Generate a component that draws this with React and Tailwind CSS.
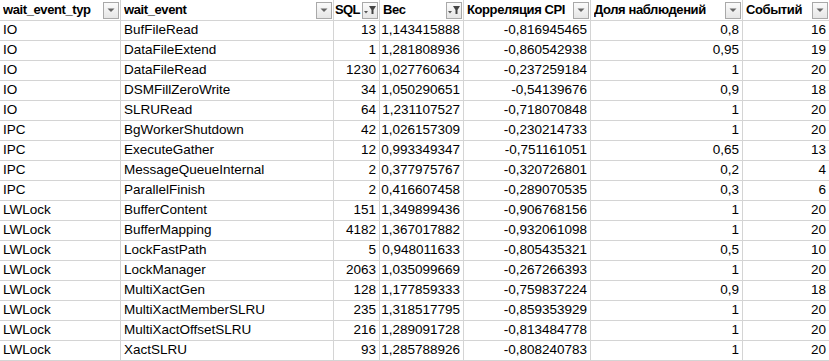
const cols = ["w-[121px]", "w-[213px]", "w-[46px]", "w-[84px]", "w-[127px]", "w-[152px]", "w-[87px]"];

const headers = [
  { title: "wait_event_typ", filter: false, pad: "pl-[3px]" },
  { title: "wait_event", filter: false, pad: "pl-[3px]" },
  { title: "SQL", filter: true, pad: "pl-[1px] tracking-[-0.6px]" },
  { title: "Вес", filter: true, pad: "pl-[3px]" },
  { title: "Корреляция CPI", filter: false, pad: "pl-[3px]" },
  { title: "Доля наблюдений", filter: false, pad: "pl-[3px]" },
  { title: "Событий", filter: false, pad: "pl-[3px]" },
];

const rows = [
  ["IO", "BufFileRead", "13", "1,143415888", "-0,816945465", "0,8", "16"],
  ["IO", "DataFileExtend", "1", "1,281808936", "-0,860542938", "0,95", "19"],
  ["IO", "DataFileRead", "1230", "1,027760634", "-0,237259184", "1", "20"],
  ["IO", "DSMFillZeroWrite", "34", "1,050290651", "-0,54139676", "0,9", "18"],
  ["IO", "SLRURead", "64", "1,231107527", "-0,718070848", "1", "20"],
  ["IPC", "BgWorkerShutdown", "42", "1,026157309", "-0,230214733", "1", "20"],
  ["IPC", "ExecuteGather", "12", "0,993349347", "-0,751161051", "0,65", "13"],
  ["IPC", "MessageQueueInternal", "2", "0,377975767", "-0,320726801", "0,2", "4"],
  ["IPC", "ParallelFinish", "2", "0,416607458", "-0,289070535", "0,3", "6"],
  ["LWLock", "BufferContent", "151", "1,349899436", "-0,906768156", "1", "20"],
  ["LWLock", "BufferMapping", "4182", "1,367017882", "-0,932061098", "1", "20"],
  ["LWLock", "LockFastPath", "5", "0,948011633", "-0,805435321", "0,5", "10"],
  ["LWLock", "LockManager", "2063", "1,035099669", "-0,267266393", "1", "20"],
  ["LWLock", "MultiXactGen", "128", "1,177859333", "-0,759837224", "0,9", "18"],
  ["LWLock", "MultiXactMemberSLRU", "235", "1,318517795", "-0,859353929", "1", "20"],
  ["LWLock", "MultiXactOffsetSLRU", "216", "1,289091728", "-0,813484778", "1", "20"],
  ["LWLock", "XactSLRU", "93", "1,285788926", "-0,808240783", "1", "20"],
];

const FilterButton = ({ filter }) => (
  <div className="shrink-0 w-[16px] h-[17px] border border-[#a9a9a9] bg-gradient-to-b from-[#fbfbfb] to-[#e6e6e6] flex items-center justify-center">
    {filter ? (
      <svg width="14" height="14" viewBox="0 0 14 14">
        <polygon points="1,8 5,8 3,10.5" fill="#555" />
        <polygon points="6,3 13,3 10.5,7 10.5,11 8.5,11 8.5,7" fill="#444" />
      </svg>
    ) : (
      <svg width="14" height="14" viewBox="0 0 14 14">
        <polygon points="3.5,5.5 10.5,5.5 7,9" fill="#666" />
      </svg>
    )}
  </div>
);

const App = () => {
  return (
    <div className="w-[829px] h-[361px] overflow-hidden bg-white text-black font-['Liberation_Sans',Arial,sans-serif] text-[13.5px]">
      {/* Header */}
      <div className="flex h-[21px]">
        {headers.map((h, i) => (
          <div
            key={i}
            className={`${cols[i]} ${h.pad} shrink-0 flex items-center border-r border-b border-[#d4d4d4] pr-[1px] font-bold text-[13px] tracking-[-0.4px]`}
          >
            <span className="flex-1 overflow-hidden whitespace-nowrap">{h.title}</span>
            <FilterButton filter={h.filter} />
          </div>
        ))}
      </div>

      {/* Rows */}
      {rows.map((r, ri) => (
        <div key={ri} className="flex h-[20px]">
          {r.map((c, ci) => (
            <div
              key={ci}
              className={`${cols[ci]} shrink-0 flex items-center border-r border-b border-[#d4d4d4] px-[3px] whitespace-nowrap overflow-hidden ${
                ci < 2 ? "justify-start" : "justify-end"
              }`}
            >
              {c}
            </div>
          ))}
        </div>
      ))}
    </div>
  );
};

export default App;
